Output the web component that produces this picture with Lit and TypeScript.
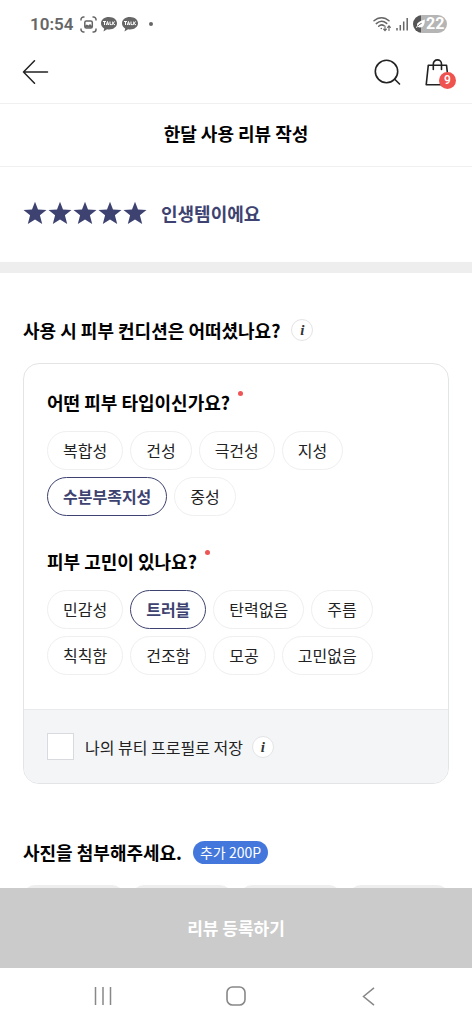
import { LitElement, html, css, svg } from "lit";
import { customElement, property, state } from "lit/decorators.js";

const KR = css`"Noto Sans CJK KR", "Noto Sans", sans-serif`;

@customElement("status-bar")
class StatusBar extends LitElement {
  static styles = css`
    :host {
      display: flex;
      justify-content: space-between;
      align-items: center;
      height: 48px;
      padding: 0 25px 0 30px;
      font-family: Roboto, sans-serif;
      color: #666;
    }
    .group { display: flex; align-items: center; }
    .left { gap: 3px; }
    .right { gap: 5px; }
    .time { font-size: 17px; font-weight: 600; line-height: 20px; margin-right: 4px; }
    .dot { width: 4px; height: 4px; border-radius: 50%; background: #666; margin-left: 7px; }
    .battery {
      display: flex;
      align-items: center;
      gap: 1px;
      height: 18px;
      width: 34px;
      border-radius: 9px;
      color: #fff;
      font-size: 16px;
      font-weight: 700;
      line-height: 18px;
      background: linear-gradient(90deg, #555 8px, #b5b5b5 8px);
    }
    .leaf { margin-left: 3px; }
    svg { display: block; }
  `;

  talk() {
    return html`<svg width="18" height="17" viewBox="0 0 18 17">
      <path fill="#666" d="M9 1C4.3 1 1 3.700 1 7.200c0 2.300 1.300 4.200 3.200 5.200L3.500 15.500l3.600-2.300c.6.100 1.200.2 1.900.2 4.700 0 8-2.800 8-6.200S13.700 1 9 1z" />
      <g fill="none" stroke="#fff" stroke-width="1">
        <path d="M3 5.500h3M4.500 5.500v3.500M6.300 9l1.200-3.500L8.700 9M6.800 8h1.500M10 5.500V8.600h1.800M12.700 5.500V9M14.900 5.500l-2 1.800L15 9" />
      </g>
    </svg>`;
  }

  render() {
    return html`
      <div class="group left">
        <span class="time">10:54</span>
        <svg width="17" height="17" viewBox="0 0 17 17" fill="none" stroke="#666" stroke-width="1.500">
          <path d="M1 4.500V3.500a2.500 2.500 0 0 1 2.500-2.500H4.500M12.500 1h1a2.500 2.500 0 0 1 2.500 2.500V4.500M16 12.500v1a2.500 2.500 0 0 1-2.500 2.500H12.500M4.500 16H3.500a2.500 2.500 0 0 1-2.500-2.500V12.500" />
          <rect x="4.800" y="5" width="7.500" height="7" rx="1.500" />
          <path d="M5 11.500V9.800l1.800-1.300 1.700 1 1.500-1.500 2 2v1.800z" fill="#666" stroke="none" />
        </svg>
        ${this.talk()}${this.talk()}
        <span class="dot"></span>
      </div>
      <div class="group right">
        <svg width="18" height="16" viewBox="0 0 18 16" fill="none" stroke="#666" stroke-width="1.500" stroke-linecap="round">
          <path d="M1 4.800C5.500 .6 11.500 .6 16 4.800M3.300 7.600c3.300-3 7.200-3 10.400-.2M5.700 10.200c1.700-1.500 3.700-1.600 5.300-.5" />
          <circle cx="8.300" cy="12.500" r=".8" fill="#666" stroke="none" />
          <path stroke-width="1.100" d="M12 10v4.500M10.600 13.200l1.400 1.500 1.400-1.500M16 14.500V10M14.600 11.300 16 9.800l1.400 1.500" />
        </svg>
        <svg width="12" height="14" viewBox="0 0 12 14" fill="none" stroke="#666" stroke-width="1.500">
          <path d="M1 13.500V11M4.300 13.500V8M7.700 13.500V4.500M11.200 13.500V1" />
        </svg>
        <span class="battery">
          <svg class="leaf" width="9" height="12" viewBox="0 0 9 12">
            <path fill="#fff" d="M8.800 1.500C9 6 7.500 9.500 4 9.500c-1 0-1.800-.3-2.300-.7L.6 10 0 9.300l1.200-1.500C.2 4.500 3.500 3.500 8.800 1.500z" />
            <path fill="none" stroke="#555" d="M1.500 8.300C3 6.700 4 6 5.500 5.400" />
          </svg>22
        </span>
      </div>
    `;
  }
}

@customElement("choice-chips")
class ChoiceChips extends LitElement {
  @property({ type: Array }) options: string[] = [];
  @property({ type: String }) selected = "";
  @property({ type: String }) label = "";

  static styles = css`
    :host { display: block; }
    .heading { display: flex; gap: 8px; margin-bottom: 16px; }
    .title { margin: 0; font-size: 18px; line-height: 26px; font-weight: 700; color: #000; }
    .required { width: 5px; height: 5px; margin-top: 2px; border-radius: 50%; background: #ee5555; }
    .chips { display: flex; flex-wrap: wrap; gap: 7px; }
    .chip {
      height: 39px;
      padding: 0 15px 2px;
      border: 1px solid #efeff0;
      border-radius: 20px;
      background: #fff;
      color: #222;
      font-family: ${KR};
      font-size: 16px;
      line-height: 24px;
      cursor: pointer;
    }
    .chip[aria-pressed="true"] { border-color: #3d4270; color: #3d4270; font-weight: 700; }
  `;

  render() {
    return html`
      <div class="heading">
        <h3 class="title" id="title">${this.label}</h3>
        <span class="required"></span>
      </div>
      <div class="chips" role="group" aria-labelledby="title">
        ${this.options.map(
          (o) => html`<button
            class="chip"
            type="button"
            aria-pressed=${o === this.selected ? "true" : "false"}
            @click=${() => (this.selected = o)}
          >${o}</button>`
        )}
      </div>
    `;
  }
}

@customElement("info-button")
class InfoButton extends LitElement {
  static styles = css`
    :host { display: block; }
    .info {
      display: flex;
      align-items: center;
      justify-content: center;
      width: 22px;
      height: 22px;
      padding: 0;
      border: 1px solid #e4e4e6;
      border-radius: 50%;
      background: #fff;
      color: #333;
      font: italic 700 15px/20px "Liberation Serif", serif;
    }
  `;
  render() {
    return html`<button class="info" type="button">i</button>`;
  }
}

@customElement("app-root")
class AppRoot extends LitElement {
  @state() private saveProfile = false;

  static styles = css`
    :host {
      display: flex;
      flex-direction: column;
      height: 100vh;
      background: #fff;
      color: #000;
      font-family: ${KR};
    }
    button { font-family: inherit; cursor: pointer; }
    svg { display: block; }
    .header {
      display: flex;
      align-items: center;
      justify-content: space-between;
      height: 55px;
      padding: 0 16px 0 22px;
      border-bottom: 1px solid #f0f0f0;
      box-sizing: content-box;
    }
    .icon { display: block; padding: 0; border: 0; background: none; }
    .actions { display: flex; align-items: center; gap: 24px; padding-bottom: 6px; }
    .back { padding-bottom: 8px; }
    .bag { position: relative; padding-right: 6px; }
    .count {
      position: absolute;
      right: 0;
      bottom: -3px;
      width: 17px;
      height: 17px;
      border-radius: 50%;
      background: #ef5350;
      color: #fff;
      font: 500 12px/17px Roboto, sans-serif;
      text-align: center;
    }
    .page-title {
      margin: 0;
      padding: 16px 0 20px;
      border-bottom: 1px solid #f0f0f0;
      font-size: 18px;
      line-height: 26px;
      font-weight: 700;
      text-align: center;
    }
    .content { flex: 1; min-height: 0; overflow-y: auto; scrollbar-width: none; }
    .rating {
      display: flex;
      align-items: center;
      gap: 14px;
      padding: 33px 23px 36px;
      border-bottom: 11px solid #eee;
      color: #3d4270;
      font-size: 18px;
      line-height: 26px;
      font-weight: 700;
    }
    .stars { display: flex; gap: 1px; }
    .section { padding: 44px 23px 0; }
    .section.photos { padding-top: 55px; }
    .section-head { display: flex; align-items: center; gap: 11px; margin-bottom: 20px; }
    .section-title { margin: 0; font-size: 18px; line-height: 26px; font-weight: 700; }
    .card { border: 1px solid #e3e4e6; border-radius: 16px; overflow: hidden; }
    .questions { display: grid; gap: 32px; padding: 25px 23px 34px; }
    .save {
      display: flex;
      align-items: center;
      gap: 9px;
      padding: 23px;
      border-top: 1px solid #e9eaec;
      background: #f4f5f7;
    }
    .save-label { display: flex; align-items: center; gap: 11px; font-size: 16px; line-height: 24px; color: #222; }
    .check {
      appearance: none;
      width: 27px;
      height: 27px;
      margin: 0;
      border: 1px solid #d9dadd;
      background: #fff;
    }
    .check:checked { background: #3d4270; }
    .bonus {
      padding: 0 7px;
      border-radius: 12px;
      background: #4377dc;
      color: #fff;
      font-size: 14px;
      line-height: 23px;
    }
    .slots { display: grid; grid-template-columns: repeat(4, 1fr); gap: 8px; }
    .slot { aspect-ratio: 1; padding: 0; border: 0; border-radius: 12px; background: #eee; }
    .submit {
      height: 80px;
      padding: 0;
      border: 0;
      background: #cbcbcb;
      color: #fff;
      font-size: 17px;
      line-height: 26px;
      font-weight: 700;
    }
    .nav {
      display: grid;
      grid-template-columns: repeat(3, 1fr);
      justify-items: center;
      align-items: center;
      height: 56px;
      padding: 0 37px;
    }
  `;

  render() {
    const star = svg`<path fill="#3d4270" d="M12 .2l3 7.900 8.500.3-6.600 5.300 2.300 8.900L12 17.900l-7.200 4.700 2.300-8.900L.5 8.400l8.500-.3z" />`;
    return html`
      <status-bar></status-bar>
      <header class="header">
        <button class="icon back" type="button" aria-label="뒤로">
          <svg width="27" height="24" viewBox="0 0 27 24" fill="none" stroke="#222" stroke-width="1.500" stroke-linecap="round" stroke-linejoin="round">
            <path d="M25.500 12H1.500M12.500 .8L1.500 12l11 11.200" />
          </svg>
        </button>
        <div class="actions">
          <button class="icon search" type="button" aria-label="검색">
            <svg width="27" height="27" viewBox="0 0 27 27" fill="none" stroke="#222" stroke-width="1.600" stroke-linecap="round">
              <circle cx="12.500" cy="12.500" r="11.200" />
              <path d="M20.500 20l5 5" />
            </svg>
          </button>
          <button class="icon bag" type="button" aria-label="장바구니">
            <svg width="25" height="27" viewBox="0 0 25 27" fill="none" stroke="#222" stroke-width="1.600" stroke-linejoin="round" stroke-linecap="round">
              <path d="M3.300 6.200h18.200L23.800 25.800H1.200z" />
              <path d="M8.300 10.500V5a4.100 4.100 0 0 1 8.200 0v5.500" />
            </svg>
            <span class="count">9</span>
          </button>
        </div>
      </header>
      <h1 class="page-title">한달 사용 리뷰 작성</h1>
      <main class="content">
        <div class="rating">
          <div class="stars" role="img" aria-label="5">
            ${[1, 2, 3, 4, 5].map(() => html`<svg width="24" height="24" viewBox="0 0 24 23">${star}</svg>`)}
          </div>
          <span>인생템이에요</span>
        </div>
        <section class="section">
          <div class="section-head">
            <h2 class="section-title">사용 시 피부 컨디션은 어떠셨나요?</h2>
            <info-button></info-button>
          </div>
          <div class="card">
            <div class="questions">
              <choice-chips
                label="어떤 피부 타입이신가요?"
                selected="수분부족지성"
                .options=${["복합성", "건성", "극건성", "지성", "수분부족지성", "중성"]}
              ></choice-chips>
              <choice-chips
                label="피부 고민이 있나요?"
                selected="트러블"
                .options=${["민감성", "트러블", "탄력없음", "주름", "칙칙함", "건조함", "모공", "고민없음"]}
              ></choice-chips>
            </div>
            <div class="save">
              <label class="save-label">
                <input
                  class="check"
                  type="checkbox"
                  .checked=${this.saveProfile}
                  @change=${(e: Event) => (this.saveProfile = (e.target as HTMLInputElement).checked)}
                />
                나의 뷰티 프로필로 저장
              </label>
              <info-button></info-button>
            </div>
          </div>
        </section>
        <section class="section photos">
          <div class="section-head">
            <h2 class="section-title">사진을 첨부해주세요.</h2>
            <span class="bonus">추가 200P</span>
          </div>
          <div class="slots">
            ${[1, 2, 3, 4].map((n) => html`<button class="slot" type="button" aria-label="사진 ${n}"></button>`)}
          </div>
        </section>
      </main>
      <button class="submit" type="button">리뷰 등록하기</button>
      <nav class="nav">
        <button class="icon" type="button" aria-label="최근 앱">
          <svg width="18" height="18" viewBox="0 0 18 18" stroke="#888" stroke-width="1.500"><path d="M1.500 0v18M9 0v18M16.500 0v18" /></svg>
        </button>
        <button class="icon" type="button" aria-label="홈">
          <svg width="20" height="20" viewBox="0 0 20 20" fill="none" stroke="#888" stroke-width="1.600"><rect x="1" y="1" width="18" height="18" rx="5.500" /></svg>
        </button>
        <button class="icon" type="button" aria-label="이전">
          <svg width="13" height="19" viewBox="0 0 13 19" fill="none" stroke="#888" stroke-width="1.500"><path d="M12 .8L1.500 9.500 12 18.200" /></svg>
        </button>
      </nav>
    `;
  }
}
